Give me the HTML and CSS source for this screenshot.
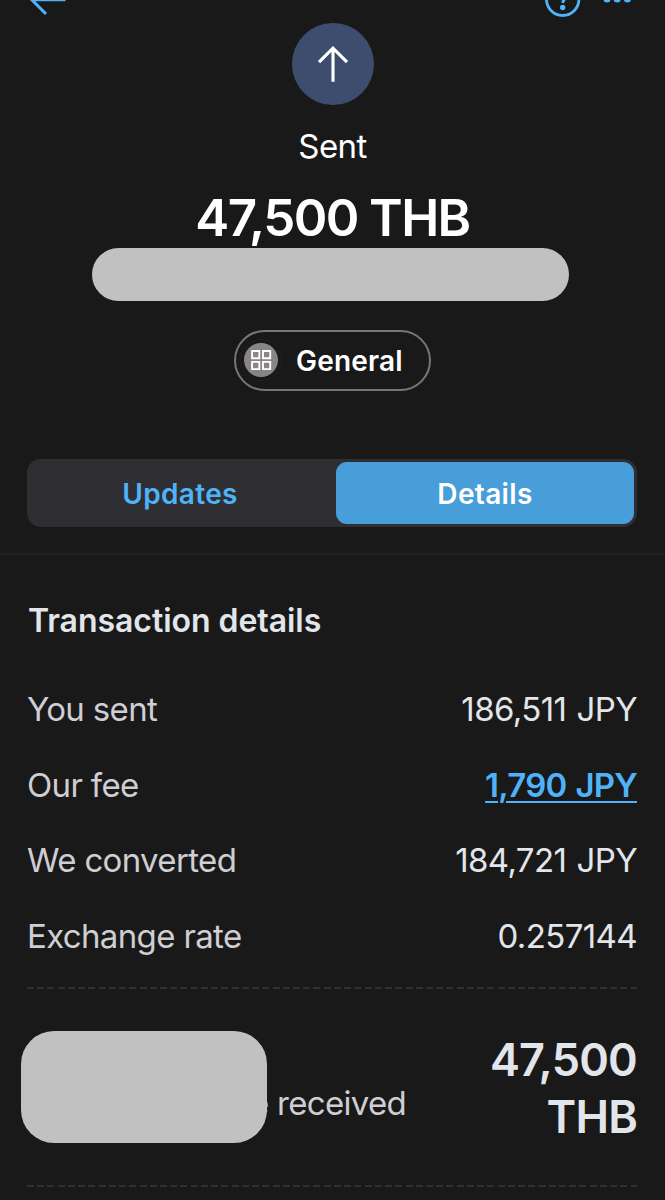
FILE: index.html
```html
<!DOCTYPE html>
<html lang="en">
<head>
  <meta charset="UTF-8">
  <meta name="viewport" content="width=device-width, initial-scale=1.0">
  <title>Transaction</title>
  <link rel="stylesheet" href="styles.css">
</head>
<body>
  <header class="topbar">
    <svg class="icon-back" width="40" height="23" viewBox="28 0 40 23">
      <path d="M65.5 -0.3H32M31 -1L46 14" />
    </svg>
    <svg class="icon-menu" width="96" height="23" viewBox="541 0 96 23">
      <circle class="ring" cx="562.7" cy="-0.7" r="16.2" />
      <path class="ring" d="M566 -2Q563 0 562.7 3" />
      <circle cx="562.7" cy="7.5" r="2.7" />
      <circle cx="607" cy="-1.1" r="3.6" />
      <circle cx="617.2" cy="-1.1" r="3.6" />
      <circle cx="627.4" cy="-1.1" r="3.6" />
    </svg>
  </header>

  <section class="summary">
    <div class="avatar">
      <svg width="82" height="82" viewBox="0 0 82 82">
        <path d="M41 58.7V25.5M27 39.2L41 25.2L55 39.2" />
      </svg>
    </div>
    <p class="status">Sent</p>
    <h1>47,500 THB</h1>
    <div class="hidden-name"></div>
    <button class="category">
      <span class="category-icon">
        <svg width="34" height="34" viewBox="0 0 34 34">
          <path d="M8.1 8h7.2v7.2H8.1zM19 8h7.2v7.2H19zM8.1 18.9h7.2v7.2H8.1zM19 18.9h7.2v7.2H19z" />
        </svg>
      </span>
      <span class="category-label">General</span>
    </button>
  </section>

  <nav class="tabs">
    <a class="tab">Updates</a>
    <a class="tab active">Details</a>
  </nav>

  <main class="details">
    <h2>Transaction details</h2>
    <div class="row">
      <span>You sent</span>
      <span class="value">186,511 JPY</span>
    </div>
    <div class="row">
      <span>Our fee</span>
      <a class="fee">1,790 JPY</a>
    </div>
    <div class="row">
      <span>We converted</span>
      <span class="value">184,721 JPY</span>
    </div>
    <div class="row">
      <span>Exchange rate</span>
      <span class="value">0.257144</span>
    </div>
    <div class="dashed"></div>
    <div class="received">
      <div class="hidden-recipient"></div>
      <span class="received-label">e received</span>
      <span class="received-amount">47,500 THB</span>
    </div>
    <div class="dashed"></div>
  </main>
</body>
</html>
```
FILE: styles.css
```css
* {
  box-sizing: border-box;
}

body {
  margin: 0;
  height: 1200px;
  overflow: hidden;
  background-color: #191919;
  color: #e2e5e9;
  font-family: "Inter", "Liberation Sans", sans-serif;
}

h1, h2, p {
  margin: 0;
}

svg {
  display: block;
}

.topbar {
  display: flex;
  justify-content: space-between;
  height: 23px;
  padding: 0 28px;
}

.icon-back path {
  fill: none;
  stroke: #4fb3f9;
  stroke-width: 3;
}

.icon-menu {
  fill: #4fb3f9;
}

.icon-menu .ring {
  fill: none;
  stroke: #4fb3f9;
  stroke-width: 2.9;
}

.summary {
  display: flex;
  flex-direction: column;
  align-items: center;
  height: 436px;
  color: #fff;
}

.avatar {
  width: 82px;
  height: 82px;
  border-radius: 50%;
  background-color: #3d4d6e;
}

.avatar path {
  fill: none;
  stroke: #fff;
  stroke-width: 3.1;
}

.status {
  margin-top: 21px;
  font-size: 33px;
  letter-spacing: -0.6px;
  line-height: 40px;
}

h1 {
  margin-top: 22px;
  font-size: 51px;
  font-weight: 600;
  letter-spacing: -1.6px;
  line-height: 60px;
}

.hidden-name {
  width: 477px;
  height: 53px;
  margin: 0 5px 29px 0;
  border-radius: 27px;
  background-color: #c1c1c1;
}

.category {
  display: flex;
  align-items: center;
  gap: 18px;
  width: 197px;
  height: 61px;
  padding: 0 0 1px 8px;
  border: 2px solid #777;
  border-radius: 31px;
  background: none;
  color: #fff;
  font: 600 28px "Inter", "Liberation Sans", sans-serif;
  letter-spacing: 0.2px;
}

.category-icon {
  width: 34px;
  height: 34px;
  border-radius: 50%;
  background-color: #8a8585;
  box-shadow: 0 0 0 3px #191919, 0 0 0 4px #202020;
}

.category-label {
  padding-top: 1px;
}

.category-icon path {
  fill: none;
  stroke: #fff;
  stroke-width: 1.9;
}

.tabs {
  display: flex;
  height: 68px;
  margin: 0 28px 26px 27px;
  padding: 3px;
  border-radius: 14px;
  background-color: #2f2e33;
}

.tab {
  flex: 1;
  padding-right: 6px;
  border-radius: 11px;
  color: #4fb3f9;
  font-size: 28px;
  font-weight: 600;
  letter-spacing: 0.35px;
  line-height: 64px;
  text-align: center;
}

.tab.active {
  flex: 0 0 298px;
  padding-right: 0;
  background-color: #489ed8;
  color: #fff;
}

.details {
  padding: 45px 28px 0 27px;
  border-top: 2px solid #212121;
}

h2 {
  margin-bottom: 29px;
  padding-left: 1px;
  font-size: 32px;
  font-weight: 600;
  letter-spacing: -0.05px;
  line-height: 42px;
}

.row {
  display: flex;
  align-items: center;
  justify-content: space-between;
  height: 75.7px;
  color: #cfced3;
  font-size: 33px;
  letter-spacing: -0.65px;
}

.value {
  color: #e2e5e9;
  letter-spacing: -0.6px;
  word-spacing: 1.5px;
}

.fee {
  color: #4fb3f9;
  font-weight: 600;
  letter-spacing: -0.8px;
  text-decoration: underline;
  text-decoration-thickness: 2px;
  text-underline-offset: 4px;
  word-spacing: 1.5px;
}

.dashed {
  height: 2px;
  margin-top: 13px;
  background: repeating-linear-gradient(to right, #303030 0 7px, transparent 7px 10.23px);
}

.received {
  display: flex;
  height: 183px;
  padding-top: 42px;
}

/* sits above the start of the label */
.hidden-recipient {
  position: relative;
  z-index: 1;
  flex: none;
  width: 246px;
  height: 112px;
  margin: 0 -17px 0 -6px;
  border-radius: 33px;
  background-color: #c1c1c1;
}

.received-label {
  padding-top: 52px;
  color: #cfced3;
  font-size: 33px;
  letter-spacing: -0.7px;
  line-height: 40px;
  white-space: nowrap;
}

.received-amount {
  width: 152px;
  margin-left: auto;
  font-size: 45px;
  font-weight: 600;
  letter-spacing: -0.8px;
  line-height: 57.5px;
  text-align: right;
}
```
